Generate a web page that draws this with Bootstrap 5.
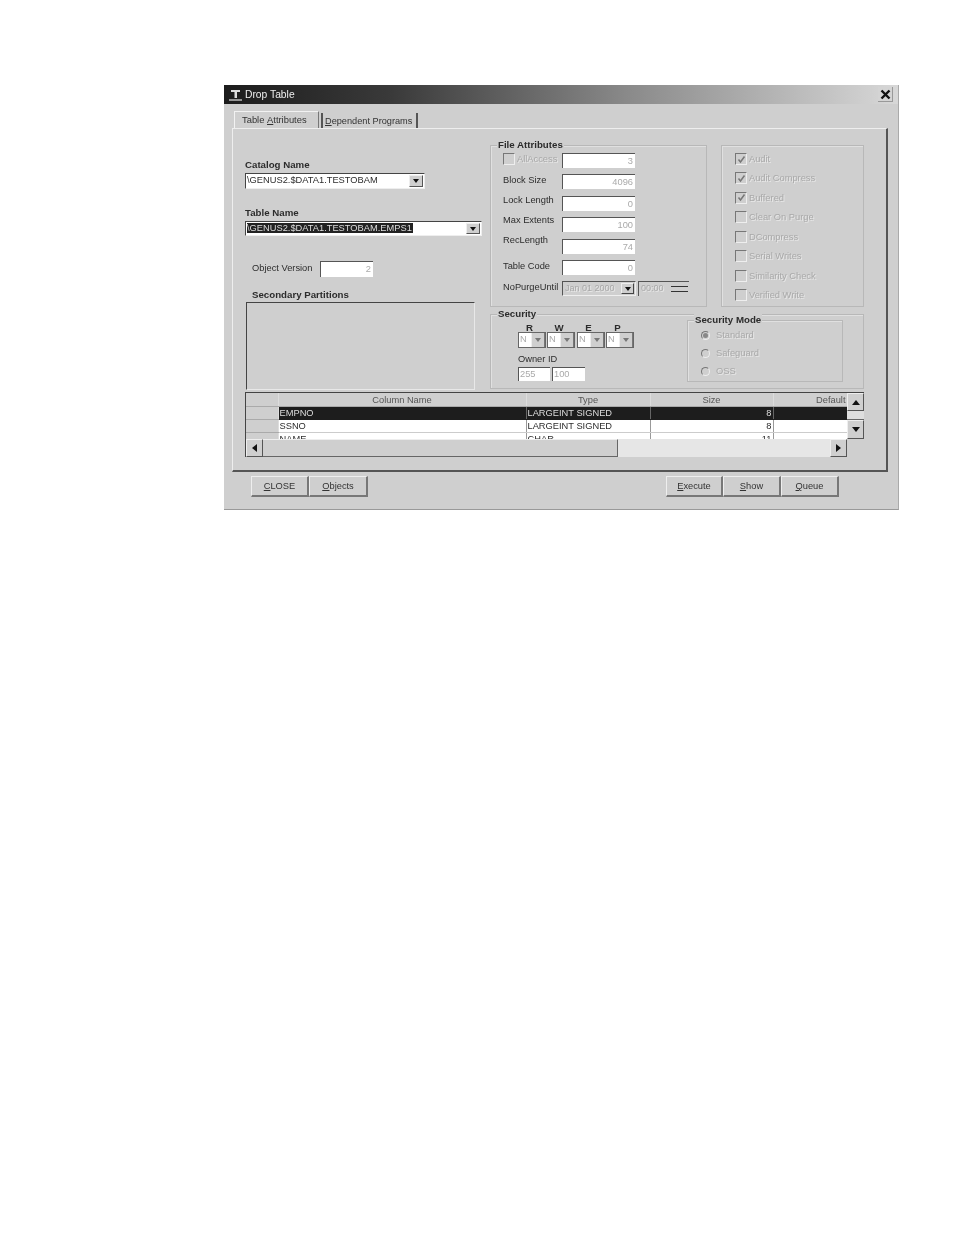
<!DOCTYPE html>
<html lang="en">
<head>
<meta charset="utf-8">
<title>Drop Table</title>
<link rel="stylesheet" href="https://cdn.jsdelivr.net/npm/bootstrap@5.3.0/dist/css/bootstrap.min.css">
<style>
html,body{background:#fff;margin:0}
body{font-family:"Liberation Sans",Arial,sans-serif;font-size:9.3px;color:#2c2c2c;line-height:12px}
.dlg{width:675px;height:425px;margin:85px 0 0 224px;background:#cfcfcf;filter:blur(.5px);border-bottom:1px solid #999;border-right:1px solid #aaa}
.ttl{height:19px;background:linear-gradient(90deg,#1c1c1c 0%,#3a3a3a 25%,#8a8a8a 60%,#d8d8d8 100%);color:#eee;font-size:10.3px;padding-left:4px;gap:2px;flex:none}
.xbtn{width:15px;height:15px;margin:0 5px 0 auto;background:#d4d4d4;border-right:1px solid #999;border-bottom:1px solid #999}
.tabbar{height:24px;padding:8px 0 0 10px;align-items:flex-end;border:0;flex-wrap:nowrap;flex:none}
.tabbar .tab1,.tabbar .tab2{line-height:12px;color:#333;padding:0;background:none;display:flex;align-items:center;white-space:nowrap}
.tabbar .tab1{font-size:9.4px;width:85px;height:17px;padding-left:7px;border-top:1px solid #f2f2f2;border-left:1px solid #f2f2f2;border-right:1px solid #777;margin-right:2px}
.tabbar .tab2{font-size:9.2px;width:97px;height:15px;padding-left:2px;border-left:2px solid #555;border-right:2px solid #555}
.pnl{width:656px;height:344px;flex:none;margin-left:8px;padding:16px 22px 0 12px;border-top:1px solid #eee;border-left:1px solid #eee;border-right:2px solid #555;border-bottom:2px solid #555}
.lcol{width:237px;flex:none}
.rcol{width:374px;margin-left:8px;flex:none}
.lbl-b{font-weight:700;font-size:9.7px;color:#2c2c2c;white-space:nowrap}
.cat-l{margin-top:14px}
.tbl-l{margin-top:18px}
.combo{display:flex;background:#fff;border-top:1px solid #444;border-left:1px solid #444;border-right:1px solid #eee;border-bottom:1px solid #eee;padding:1px;align-items:stretch;line-height:12px}
.combo-cat{width:180px;height:16px;margin-top:2px}
.combo-tbl{width:237px;height:15px;margin-top:2px}
.combo .val{flex:1;white-space:nowrap;overflow:hidden;line-height:11px}
.sel{background:#222;color:#ddd;padding:0 1px 0 0}
.drop{width:14px;flex:none;background:#cfcfcf;border-right:1px solid #555;border-bottom:1px solid #555;border-top:1px solid #eee;border-left:1px solid #eee;display:flex;align-items:center;justify-content:center}
.tri{width:0;height:0;border-left:3px solid transparent;border-right:3px solid transparent;border-top:4px solid #111}
.objrow{margin-top:25px;padding-left:7px;height:16px}
.objrow .cap{width:68px;flex:none;white-space:nowrap;margin-top:-3px}
.sunk{background:#fff;border-top:1px solid #555;border-left:1px solid #555;text-align:right;color:#aaa;padding:2px 2px 0 0;line-height:11px;white-space:nowrap;overflow:hidden}
.objbox{width:53px;height:16px}
.sec-l{margin:12px 0 1px 7px}
.secbox{width:229px;height:88px;margin-left:1px;border-top:1px solid #444;border-left:1px solid #444;border-right:1px solid #e8e8e8;border-bottom:1px solid #e8e8e8}
.grp{position:relative;border:1px solid #b8b8b8;box-shadow:inset 1px 1px 0 #e0e0e0}
.grp-cap{position:absolute;top:-7px;left:6px;background:#cfcfcf;padding:0 1px}
.g-file{width:217px;height:162px;padding:7px 0 0 12px;margin-right:14px;gap:6.4px;display:flex;flex-direction:column}
.g-chk{width:143px;height:162px;padding:7px 0 0 13px;display:flex;flex-direction:column;gap:7.45px}
.frow{height:15px;display:flex;align-items:flex-start}
.frow .cap{width:59px;flex:none;white-space:nowrap;line-height:12px}
.up1{margin-top:-2px}.up2{margin-top:-3px}.up3{margin-top:-5px}
.fin{width:73px;height:15px}
.cb{width:12px;height:12px;flex:none;background:#cfcfcf;border-top:1px solid #777;border-left:1px solid #777;border-right:1px solid #eee;border-bottom:1px solid #eee;display:flex;align-items:center;justify-content:center}
.dis{color:#a9a9a9;text-shadow:1px 1px 0 #e8e8e8;white-space:nowrap}
.chk{display:flex;align-items:center;gap:2px;height:12px}
.drow{gap:2px}
.drow .cap{width:57px!important}
.dbox{width:74px;height:15px;background:#cfcfcf;border-top:1px solid #555;border-left:1px solid #555;border-right:1px solid #eee;border-bottom:1px solid #eee;display:flex;padding:1px 1px 1px 2px;line-height:11px}
.tbox{width:51px;height:15px;background:#cfcfcf;border-top:1px solid #555;border-left:1px solid #555;display:flex;padding:1px 1px 1px 2px;line-height:11px}
.dbox .dis{flex:1;font-size:9px;overflow:hidden}
.tbox .dis{flex:1;font-size:9px}
.spin{width:17px;display:flex;flex-direction:column;justify-content:center;gap:4px}
.spin i{display:block;height:1px;background:#333}
.dbox .drop{width:13px;border-color:#eee #444 #444 #eee}
.g-sec{height:75px;margin-top:7px;padding:0 0 0 27px;width:374px}
.perm{width:118px;padding-top:8px;flex:none}
.rwep{display:grid;grid-template-columns:29px 30px 29px 29px}
.rwep-h{font-weight:700;font-size:9.7px;text-align:center;line-height:9px;padding-right:6px}
.pcombo{height:16px;display:flex;background:#fff;width:28px;border:1px solid #666;color:#aaa;padding-left:1px;line-height:13px}
.pcombo span{flex:1}
.pcombo .drop{width:14px;background:#cfcfcf;border:0;border-left:1px solid #eee;border-right:1px solid #777}
.pcombo .tri{border-top-color:#777}
.owncap{margin-top:5px}
.ownrow{gap:2px;margin-top:2px}
.own1{width:32px;height:14px;text-align:left;padding:1px 0 0 1px}
.own2{width:33px;height:14px;text-align:left;padding:1px 0 0 1px}
.g-mode{width:156px;height:62px;margin:5px 0 0 51px;padding:8px 0 0 13px;display:flex;flex-direction:column;gap:6px;flex:none}
.rad{width:9px;height:9px;border-radius:50%;border:1px solid #777;border-right-color:#eee;border-bottom-color:#eee;flex:none;margin-right:4px;display:flex;align-items:center;justify-content:center}
.rad b{width:5px;height:5px;border-radius:50%;background:#888}
.gridwrap{display:grid;grid-template-columns:601px 17px;grid-template-rows:46px 18px;margin:2px 0 0 0;width:619px;border-top:1px solid #444;border-left:1px solid #444}
.gclip{height:46px;overflow:hidden;background:#fff}
.dgrid{table-layout:fixed;width:601px;margin:0;font-size:9.3px;line-height:12px}
.dgrid>:not(caption)>*>*{padding:0 1px;height:13px;border:0;border-right:1px solid #999;border-bottom:1px solid #ccc;color:#2c2c2c;background:#fff;box-shadow:none;white-space:nowrap;overflow:hidden}
.dgrid>thead>tr>th,.dgrid>tbody>tr>th{background:#cfcfcf;font-weight:400;text-align:center;color:#555;border-bottom:1px solid #aaa;border-right:1px solid #ddd}
.dgrid>thead>tr>th.text-end{text-align:right}
.dgrid>tbody>tr.cur>td{background:#1d1d1d;color:#ddd;border-bottom:1px solid #1d1d1d;border-right-color:#666}
.vbar{display:flex;flex-direction:column;background:#cfcfcf}
.sbtn{background:#cfcfcf;border-top:1px solid #eee;border-left:1px solid #eee;border-right:1px solid #555;border-bottom:1px solid #555;display:flex;align-items:center;justify-content:center;flex:none}
.vup{height:18px}.vtrack{height:9px;background:#dedede;border-bottom:1px solid #666;flex:none}.vdn{height:19px}
.up-t{width:0;height:0;border-left:4px solid transparent;border-right:4px solid transparent;border-bottom:5px solid #111}
.dn-t{width:0;height:0;border-left:4px solid transparent;border-right:4px solid transparent;border-top:5px solid #111}
.lf-t{width:0;height:0;border-top:4px solid transparent;border-bottom:4px solid transparent;border-right:5px solid #111}
.rt-t{width:0;height:0;border-top:4px solid transparent;border-bottom:4px solid transparent;border-left:5px solid #111}
.hbar{display:flex;height:18px;background:#e6e6e6}
.hb{width:17px}.hthumb{width:355px;background:#cfcfcf;border-top:1px solid #eee;border-right:1px solid #666;border-bottom:1px solid #666;flex:none}
.htrack{flex:1}
.btnrow{padding:4px 0 0 27px;width:615px;flex:none}
.wgroup{display:flex}
.wbtn.btn{--bs-btn-padding-x:0;--bs-btn-padding-y:0;--bs-btn-font-size:9.3px;--bs-btn-line-height:12px;--bs-btn-color:#333;--bs-btn-bg:#cfcfcf;--bs-btn-border-radius:0;--bs-btn-border-width:0;height:21px;background:#cfcfcf;border-top:1px solid #eee;border-left:1px solid #eee;border-right:2px solid #777;border-bottom:2px solid #777;font-family:inherit}
.w58{width:58px}.w59{width:59px}.w57{width:57px}
</style>
</head>
<body>
<div class="dlg d-flex flex-column">
  <div class="ttl d-flex align-items-center">
    <svg width="15" height="15" viewBox="0 0 15 15"><path d="M3 3h9v2H9v6H6.500V5H3z" fill="#ddd"/><path d="M1 13h13" stroke="#bbb" stroke-width="1.500"/></svg>
    <span>Drop Table</span>
    <div class="xbtn d-flex align-items-center justify-content-center">
      <svg width="11" height="11" viewBox="0 0 11 11"><path d="M1.500 1.500l8 8M9.500 1.500l-8 8" stroke="#111" stroke-width="2.400"/></svg>
    </div>
  </div>
  <ul class="nav tabbar">
    <li class="nav-item"><span class="nav-link tab1">Table&nbsp;<u>A</u>ttributes</span></li>
    <li class="nav-item"><span class="nav-link tab2"><u>D</u>ependent Programs</span></li>
  </ul>
  <div class="pnl d-flex flex-wrap align-content-start">
    <div class="lcol">
      <div class="lbl-b cat-l">Catalog Name</div>
      <div class="combo combo-cat"><span class="val">\GENUS2.$DATA1.TESTOBAM</span><span class="drop"><i class="tri"></i></span></div>
      <div class="lbl-b tbl-l">Table Name</div>
      <div class="combo combo-tbl"><span class="val"><span class="sel">\GENUS2.$DATA1.TESTOBAM.EMPS1</span></span><span class="drop"><i class="tri"></i></span></div>
      <div class="objrow d-flex align-items-center"><span class="cap">Object Version</span><div class="sunk objbox">2</div></div>
      <div class="lbl-b sec-l">Secondary Partitions</div>
      <div class="secbox"></div>
    </div>
    <div class="rcol">
      <div class="d-flex">
        <div class="grp g-file">
          <span class="lbl-b grp-cap">File Attributes</span>
          <div class="frow"><span class="cap chk"><span class="cb"></span><span class="dis">AllAccess</span></span><div class="sunk fin">3</div></div>
          <div class="frow"><span class="cap">Block Size</span><div class="sunk fin">4096</div></div>
          <div class="frow"><span class="cap up1">Lock Length</span><div class="sunk fin">0</div></div>
          <div class="frow"><span class="cap up2">Max Extents</span><div class="sunk fin">100</div></div>
          <div class="frow"><span class="cap up3">RecLength</span><div class="sunk fin">74</div></div>
          <div class="frow"><span class="cap">Table Code</span><div class="sunk fin">0</div></div>
          <div class="frow drow"><span class="cap">NoPurgeUntil</span>
            <div class="dbox"><span class="dis">Jan 01 2000</span><span class="drop"><i class="tri"></i></span></div>
            <div class="tbox"><span class="dis">00:00</span><span class="spin"><i></i><i></i></span></div>
          </div>
        </div>
        <div class="grp g-chk">
          <div class="chk"><span class="cb"><svg width="9" height="9" viewBox="0 0 9 9"><path d="M1.500 4.500l2 2.500 4-5.500" fill="none" stroke="#777" stroke-width="1.500"/></svg></span><span class="dis">Audit</span></div>
          <div class="chk"><span class="cb"><svg width="9" height="9" viewBox="0 0 9 9"><path d="M1.500 4.500l2 2.500 4-5.500" fill="none" stroke="#777" stroke-width="1.500"/></svg></span><span class="dis">Audit Compress</span></div>
          <div class="chk"><span class="cb"><svg width="9" height="9" viewBox="0 0 9 9"><path d="M1.500 4.500l2 2.500 4-5.500" fill="none" stroke="#777" stroke-width="1.500"/></svg></span><span class="dis">Buffered</span></div>
          <div class="chk"><span class="cb"></span><span class="dis">Clear On Purge</span></div>
          <div class="chk"><span class="cb"></span><span class="dis">DCompress</span></div>
          <div class="chk"><span class="cb"></span><span class="dis">Serial Writes</span></div>
          <div class="chk"><span class="cb"></span><span class="dis">Similarity Check</span></div>
          <div class="chk"><span class="cb"></span><span class="dis">Verified Write</span></div>
        </div>
      </div>
      <div class="grp g-sec d-flex">
        <span class="lbl-b grp-cap">Security</span>
        <div class="perm">
          <div class="rwep"><span class="rwep-h">R</span><span class="rwep-h">W</span><span class="rwep-h">E</span><span class="rwep-h">P</span></div>
          <div class="rwep">
            <div class="pcombo"><span>N</span><i class="drop"><i class="tri"></i></i></div>
            <div class="pcombo"><span>N</span><i class="drop"><i class="tri"></i></i></div>
            <div class="pcombo"><span>N</span><i class="drop"><i class="tri"></i></i></div>
            <div class="pcombo"><span>N</span><i class="drop"><i class="tri"></i></i></div>
          </div>
          <div class="owncap">Owner ID</div>
          <div class="d-flex ownrow"><div class="sunk own1">255</div><div class="sunk own2">100</div></div>
        </div>
        <div class="grp g-mode">
          <span class="lbl-b grp-cap">Security Mode</span>
          <div class="chk"><span class="rad"><b></b></span><span class="dis">Standard</span></div>
          <div class="chk"><span class="rad"></span><span class="dis">Safeguard</span></div>
          <div class="chk"><span class="rad"></span><span class="dis">OSS</span></div>
        </div>
      </div>
    </div>
    <div class="gridwrap">
      <div class="gclip">
        <table class="table dgrid">
          <colgroup><col style="width:32px"><col style="width:248px"><col style="width:124px"><col style="width:123px"><col style="width:74px"></colgroup>
          <thead><tr><th></th><th>Column Name</th><th>Type</th><th>Size</th><th class="text-end">Default</th></tr></thead>
          <tbody>
            <tr class="cur"><th></th><td>EMPNO</td><td>LARGEINT SIGNED</td><td class="text-end">8</td><td></td></tr>
            <tr><th></th><td>SSNO</td><td>LARGEINT SIGNED</td><td class="text-end">8</td><td></td></tr>
            <tr><th></th><td>NAME</td><td>CHAR</td><td class="text-end">11</td><td></td></tr>
          </tbody>
        </table>
      </div>
      <div class="vbar"><span class="sbtn vup"><i class="up-t"></i></span><span class="vtrack"></span><span class="sbtn vdn"><i class="dn-t"></i></span></div>
      <div class="hbar"><span class="sbtn hb"><i class="lf-t"></i></span><span class="hthumb"></span><span class="htrack"></span><span class="sbtn hb"><i class="rt-t"></i></span></div>
      <div></div>
    </div>
  </div>
  <div class="btnrow d-flex justify-content-between">
    <div class="wgroup">
      <button type="button" class="btn wbtn w58"><u>C</u>LOSE</button>
      <button type="button" class="btn wbtn w59"><u>O</u>bjects</button>
    </div>
    <div class="wgroup">
      <button type="button" class="btn wbtn w57"><u>E</u>xecute</button>
      <button type="button" class="btn wbtn w58"><u>S</u>how</button>
      <button type="button" class="btn wbtn w58"><u>Q</u>ueue</button>
    </div>
  </div>
</div>
<script src="https://cdn.jsdelivr.net/npm/bootstrap@5.3.0/dist/js/bootstrap.bundle.min.js"></script>
</body>
</html>
